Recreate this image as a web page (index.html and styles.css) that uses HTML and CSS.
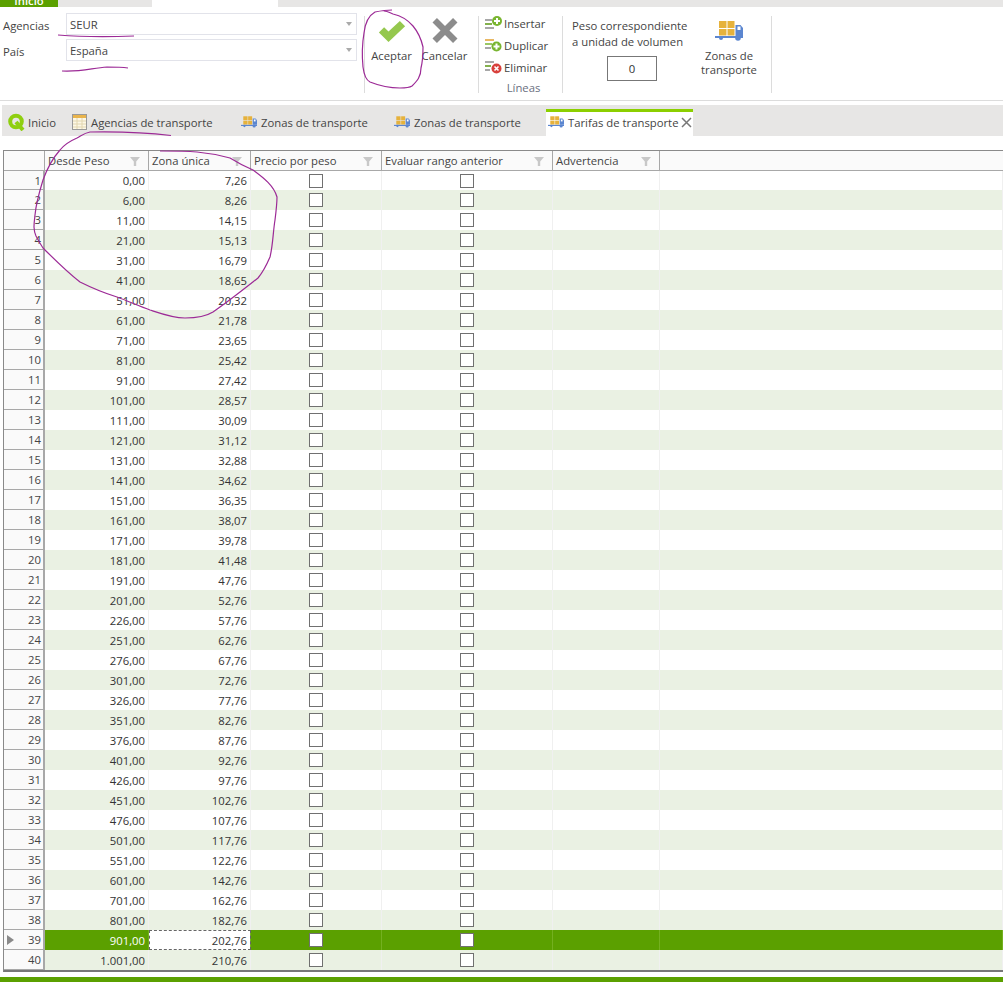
FILE: index.html

```html
<!DOCTYPE html>
<html lang="en">
<head>
    <meta charset="UTF-8">
    <title>Tarifas de transporte</title>
    <link rel="stylesheet" href="styles.css">
</head>
<body>
<svg class="defs" width="0" height="0">
    <symbol id="truck" viewBox="0 0 28 20">
        <rect x="4" y="0" width="7.500" height="7" fill="#e6b23c"/>
        <rect x="12.500" y="0" width="7" height="7" fill="#e6b23c"/>
        <rect x="4" y="8" width="7.500" height="6.500" fill="#e6b23c"/>
        <rect x="12.500" y="8" width="7" height="6.500" fill="#e6b23c"/>
        <path d="M20.500 4h5l2.500 3v8h-7.500z" fill="#5b86d0"/>
        <rect x="22.500" y="5.500" width="3" height="3.500" fill="#fff"/>
        <rect x="0" y="15" width="28" height="2" fill="#5b86d0"/>
        <circle cx="6" cy="17" r="2" fill="#5b86d0"/>
        <circle cx="23" cy="17" r="2.800" fill="#5b86d0"/>
    </symbol>
</svg>

<div class="topstrip">
    <div class="filetab">Inicio</div>
    <div class="hometab"></div>
</div>

<div class="ribbon">
    <div class="filters">
        <div class="field"><label>Agencias</label><div class="combo">SEUR<i class="arrow"></i></div></div>
        <div class="field"><label>País</label><div class="combo">España<i class="arrow"></i></div></div>
    </div>
    <div class="group actions">
        <div class="bigbtn accept">
            <svg width="28" height="23" viewBox="0 0 32 26"><path d="M1 14l6-6 5 5L25 1l6 6-19 18z" fill="#95c84e"/></svg>
            <span>Aceptar</span>
        </div>
        <div class="bigbtn cancel">
            <svg width="26" height="25" viewBox="0 0 28 28"><path d="M5 0l9 9 9-9 5 5-9 9 9 9-5 5-9-9-9 9-5-5 9-9-9-9z" fill="#8c8c8c"/></svg>
            <span>Cancelar</span>
        </div>
    </div>
    <div class="group lines">
        <div class="linebtn">
            <svg width="17" height="14" viewBox="0 0 17 14">
                <path d="M0 4h7M0 8h7M0 12h9" stroke="#8a8a8a" stroke-width="1.500"/>
                <path d="M0 8h7" stroke="#79b530" stroke-width="1.500"/>
                <circle cx="12" cy="5" r="5" fill="#79b530"/>
                <path d="M12 2v6M9 5h6" stroke="#fff" stroke-width="2"/>
            </svg>
            Insertar
        </div>
        <div class="linebtn">
            <svg width="17" height="14" viewBox="0 0 17 14">
                <path d="M0 2h9" stroke="#e0a030" stroke-width="1.500"/>
                <path d="M0 6h7" stroke="#79b530" stroke-width="1.500"/>
                <path d="M0 10h6" stroke="#8a8a8a" stroke-width="1.500"/>
                <circle cx="11.500" cy="8.500" r="5" fill="#79b530"/>
                <path d="M11.500 5.500v6M8.500 8.500h6" stroke="#fff" stroke-width="2"/>
            </svg>
            Duplicar
        </div>
        <div class="linebtn">
            <svg width="17" height="14" viewBox="0 0 17 14">
                <path d="M0 2h9M0 6h6M0 10h5" stroke="#8a8a8a" stroke-width="1.500"/>
                <path d="M0 6h6" stroke="#79b530" stroke-width="1.500"/>
                <circle cx="11.500" cy="8.500" r="5" fill="#d8403c"/>
                <path d="M9.500 6.500l4 4M13.500 6.500l-4 4" stroke="#fff" stroke-width="1.600"/>
            </svg>
            Eliminar
        </div>
        <div class="grouplabel">Líneas</div>
    </div>
    <div class="group weight">
        <div class="weightlabel">Peso correspondiente<br>a unidad de volumen</div>
        <div class="weightbox">0</div>
    </div>
    <div class="group zones">
        <svg width="28" height="20"><use href="#truck"/></svg>
        <span>Zonas de<br>transporte</span>
    </div>
</div>

<div class="tabstrip">
    <div class="tab tab-home">
        <svg width="17" height="18" viewBox="0 0 17 18"><circle cx="8" cy="8.500" r="5.800" fill="none" stroke="#8fcf10" stroke-width="4"/><path d="M8 9l7 8" stroke="#8fcf10" stroke-width="4"/></svg>
        Inicio
    </div>
    <div class="tab tab-agencies">
        <svg width="15" height="16" viewBox="0 0 15 16">
            <rect x="0.500" y="0.500" width="14" height="15" fill="#fdf8e6" stroke="#9a9a9a"/>
            <rect x="1" y="1" width="13" height="3" fill="#e9b44c"/>
            <path d="M1 7h13M1 10h13M1 13h13M5 4v11M10 4v11" stroke="#e2d6b0"/>
        </svg>
        Agencias de transporte
    </div>
    <div class="tab tab-zones1"><svg width="16" height="12"><use href="#truck"/></svg>Zonas de transporte</div>
    <div class="tab tab-zones2"><svg width="16" height="12"><use href="#truck"/></svg>Zonas de transporte</div>
    <div class="tab tab-active">
        <svg width="16" height="12"><use href="#truck"/></svg>Tarifas de transporte
        <svg class="tabclose" width="11" height="11" viewBox="0 0 11 11"><path d="M1 1l9 9M10 1l-9 9" stroke="#777" stroke-width="1.500"/></svg>
    </div>
</div>

<table class="grid">
    <colgroup>
        <col class="c-head"><col class="c-from"><col class="c-zone"><col class="c-price"><col class="c-eval"><col class="c-warn"><col>
    </colgroup>
    <thead>
        <tr>
            <th></th>
            <th>Desde Peso<i class="filter"></i></th>
            <th>Zona única<i class="filter"></i></th>
            <th>Precio por peso<i class="filter"></i></th>
            <th>Evaluar rango anterior<i class="filter"></i></th>
            <th>Advertencia<i class="filter"></i></th>
            <th class="filler"></th>
        </tr>
    </thead>
    <tbody>
        <tr><th>1</th><td>0,00</td><td>7,26</td><td><i class="cb"></i></td><td><i class="cb"></i></td><td></td><td></td></tr>
        <tr><th>2</th><td>6,00</td><td>8,26</td><td><i class="cb"></i></td><td><i class="cb"></i></td><td></td><td></td></tr>
        <tr><th>3</th><td>11,00</td><td>14,15</td><td><i class="cb"></i></td><td><i class="cb"></i></td><td></td><td></td></tr>
        <tr><th>4</th><td>21,00</td><td>15,13</td><td><i class="cb"></i></td><td><i class="cb"></i></td><td></td><td></td></tr>
        <tr><th>5</th><td>31,00</td><td>16,79</td><td><i class="cb"></i></td><td><i class="cb"></i></td><td></td><td></td></tr>
        <tr><th>6</th><td>41,00</td><td>18,65</td><td><i class="cb"></i></td><td><i class="cb"></i></td><td></td><td></td></tr>
        <tr><th>7</th><td>51,00</td><td>20,32</td><td><i class="cb"></i></td><td><i class="cb"></i></td><td></td><td></td></tr>
        <tr><th>8</th><td>61,00</td><td>21,78</td><td><i class="cb"></i></td><td><i class="cb"></i></td><td></td><td></td></tr>
        <tr><th>9</th><td>71,00</td><td>23,65</td><td><i class="cb"></i></td><td><i class="cb"></i></td><td></td><td></td></tr>
        <tr><th>10</th><td>81,00</td><td>25,42</td><td><i class="cb"></i></td><td><i class="cb"></i></td><td></td><td></td></tr>
        <tr><th>11</th><td>91,00</td><td>27,42</td><td><i class="cb"></i></td><td><i class="cb"></i></td><td></td><td></td></tr>
        <tr><th>12</th><td>101,00</td><td>28,57</td><td><i class="cb"></i></td><td><i class="cb"></i></td><td></td><td></td></tr>
        <tr><th>13</th><td>111,00</td><td>30,09</td><td><i class="cb"></i></td><td><i class="cb"></i></td><td></td><td></td></tr>
        <tr><th>14</th><td>121,00</td><td>31,12</td><td><i class="cb"></i></td><td><i class="cb"></i></td><td></td><td></td></tr>
        <tr><th>15</th><td>131,00</td><td>32,88</td><td><i class="cb"></i></td><td><i class="cb"></i></td><td></td><td></td></tr>
        <tr><th>16</th><td>141,00</td><td>34,62</td><td><i class="cb"></i></td><td><i class="cb"></i></td><td></td><td></td></tr>
        <tr><th>17</th><td>151,00</td><td>36,35</td><td><i class="cb"></i></td><td><i class="cb"></i></td><td></td><td></td></tr>
        <tr><th>18</th><td>161,00</td><td>38,07</td><td><i class="cb"></i></td><td><i class="cb"></i></td><td></td><td></td></tr>
        <tr><th>19</th><td>171,00</td><td>39,78</td><td><i class="cb"></i></td><td><i class="cb"></i></td><td></td><td></td></tr>
        <tr><th>20</th><td>181,00</td><td>41,48</td><td><i class="cb"></i></td><td><i class="cb"></i></td><td></td><td></td></tr>
        <tr><th>21</th><td>191,00</td><td>47,76</td><td><i class="cb"></i></td><td><i class="cb"></i></td><td></td><td></td></tr>
        <tr><th>22</th><td>201,00</td><td>52,76</td><td><i class="cb"></i></td><td><i class="cb"></i></td><td></td><td></td></tr>
        <tr><th>23</th><td>226,00</td><td>57,76</td><td><i class="cb"></i></td><td><i class="cb"></i></td><td></td><td></td></tr>
        <tr><th>24</th><td>251,00</td><td>62,76</td><td><i class="cb"></i></td><td><i class="cb"></i></td><td></td><td></td></tr>
        <tr><th>25</th><td>276,00</td><td>67,76</td><td><i class="cb"></i></td><td><i class="cb"></i></td><td></td><td></td></tr>
        <tr><th>26</th><td>301,00</td><td>72,76</td><td><i class="cb"></i></td><td><i class="cb"></i></td><td></td><td></td></tr>
        <tr><th>27</th><td>326,00</td><td>77,76</td><td><i class="cb"></i></td><td><i class="cb"></i></td><td></td><td></td></tr>
        <tr><th>28</th><td>351,00</td><td>82,76</td><td><i class="cb"></i></td><td><i class="cb"></i></td><td></td><td></td></tr>
        <tr><th>29</th><td>376,00</td><td>87,76</td><td><i class="cb"></i></td><td><i class="cb"></i></td><td></td><td></td></tr>
        <tr><th>30</th><td>401,00</td><td>92,76</td><td><i class="cb"></i></td><td><i class="cb"></i></td><td></td><td></td></tr>
        <tr><th>31</th><td>426,00</td><td>97,76</td><td><i class="cb"></i></td><td><i class="cb"></i></td><td></td><td></td></tr>
        <tr><th>32</th><td>451,00</td><td>102,76</td><td><i class="cb"></i></td><td><i class="cb"></i></td><td></td><td></td></tr>
        <tr><th>33</th><td>476,00</td><td>107,76</td><td><i class="cb"></i></td><td><i class="cb"></i></td><td></td><td></td></tr>
        <tr><th>34</th><td>501,00</td><td>117,76</td><td><i class="cb"></i></td><td><i class="cb"></i></td><td></td><td></td></tr>
        <tr><th>35</th><td>551,00</td><td>122,76</td><td><i class="cb"></i></td><td><i class="cb"></i></td><td></td><td></td></tr>
        <tr><th>36</th><td>601,00</td><td>142,76</td><td><i class="cb"></i></td><td><i class="cb"></i></td><td></td><td></td></tr>
        <tr><th>37</th><td>701,00</td><td>162,76</td><td><i class="cb"></i></td><td><i class="cb"></i></td><td></td><td></td></tr>
        <tr><th>38</th><td>801,00</td><td>182,76</td><td><i class="cb"></i></td><td><i class="cb"></i></td><td></td><td></td></tr>
        <tr class="selected"><th><i class="pointer"></i>39</th><td>901,00</td><td class="current">202,76</td><td><i class="cb"></i></td><td><i class="cb"></i></td><td></td><td></td></tr>
        <tr><th>40</th><td>1.001,00</td><td>210,76</td><td><i class="cb"></i></td><td><i class="cb"></i></td><td></td><td></td></tr>
    </tbody>
</table>

<div class="statusbar"></div>

<svg class="ink" width="1003" height="982" viewBox="0 0 1003 982">
    <path d="M58 35c25 2 50 2 76 1"/>
    <path d="M62 71c20 1 30-3 45-4 8 0 14 0 21 1"/>
    <path d="M392 10c-6 0-12 1-17 2-7 4-10 12-11 21-2 12-2 24-1 34 1 8 3 13 7 15 10 4 20 6 30 6 5 0 9 0 12-2 5-5 9-9 9-18 2-8 2-14 2-21-2-9-5-15-10-21-6-7-11-10-20-12-3-1-5-3-9-3"/>
    <path d="M171 135.500c-25-3-55-4-81-3.500-6 1-9 4-13 6-7 3-13 7-17 12-8 9-13 19-17 30-4 13-7 24-8 35-1 9-2 14 1 21 3 6 5 9 7 12 12 12 24 24 37 34 12 6 24 11 37 15 11 4 22 9 33 13 12 4 23 8 35 8 10 0 20-1 28-6 16-11 31-23 45-34 5-6 9-14 12-21 3-12 3-25 5-37 1-8 2-16 2-23-3-11-13-19-24-27-7-3-15-7-23-12-11-3-22-5-33-6-12-1-25-1-37-1"/>
</svg>
</body>
</html>
```

FILE: styles.css

```css
* {
    box-sizing: border-box;
}
body {
    margin: 0;
    background: white;
    color: #444;
    font-family: "Open Sans", "Liberation Sans", sans-serif;
    font-size: 11.3px;
    overflow: hidden;
}
.defs {
    display: block;
    height: 0;
}
.topstrip {
    display: flex;
    height: 7px;
    background-color: #e7e6e5;
}
.filetab {
    width: 58px;
    background-color: #5ba000;
    color: white;
    font-weight: 600;
    line-height: 1px;
    text-align: center;
    overflow: hidden;
}
.hometab {
    width: 126px;
    margin-left: 94px;
    background-color: white;
}
.ribbon {
    display: flex;
    height: 94px;
    padding-top: 6px;
    border-bottom: 1px solid #dcdcdc;
}
.filters {
    width: 364px;
    padding-left: 3px;
}
.field {
    display: flex;
    align-items: center;
    height: 22px;
    margin-bottom: 4px;
}
.field label {
    width: 63px;
    padding-top: 2px;
}
.combo {
    position: relative;
    width: 291px;
    height: 22px;
    padding-left: 3px;
    line-height: 21px;
    border: 1px solid #e2e3ea;
}
.arrow {
    position: absolute;
    right: 4px;
    top: 8px;
    border-top: 4px solid #aaa;
    border-left: 3px solid transparent;
    border-right: 3px solid transparent;
}
.group {
    height: 77px;
    margin-top: 3px;
    border-left: 1px solid #dcdcdc;
}
.actions {
    display: flex;
    width: 114px;
}
.bigbtn {
    display: flex;
    flex-direction: column;
    align-items: center;
    width: 53px;
    flex-shrink: 0;
}
.accept svg {
    margin-top: 4px;
}
.cancel svg {
    margin-top: 2px;
}
.bigbtn span {
    margin-top: 5px;
}
.lines {
    width: 84px;
    padding-left: 6px;
}
.linebtn {
    display: flex;
    align-items: center;
    gap: 2px;
    height: 22px;
    margin-top: -4px;
    margin-bottom: 4px;
}
.grouplabel {
    margin-top: -2px;
    text-align: center;
    color: #6a6f80;
}
.weight {
    width: 133px;
    padding: 2px 0 0 9px;
    line-height: 16px;
}
.weightbox {
    width: 50px;
    height: 25px;
    margin: 6px 0 0 35px;
    border: 1px solid #777;
    line-height: 23px;
    text-align: center;
    color: #333;
}
.zones {
    display: flex;
    flex-direction: column;
    align-items: center;
    width: 77px;
    border-right: 1px solid #dcdcdc;
    border-left: 0;
    padding: 5px 8px 0 0;
    line-height: 14px;
    text-align: center;
}
.zones svg {
    margin-bottom: 8px;
}
.tabstrip {
    display: flex;
    height: 31px;
    margin: 4px 0 14px 2px;
    background-color: #e7e6e5;
}
.tab {
    display: flex;
    align-items: center;
    gap: 4px;
    margin-top: 4px;
    padding-bottom: 4px;
    border-top: 3px solid transparent;
    white-space: nowrap;
}
.tab-home {
    margin-left: 6px;
    width: 64px;
    gap: 3px;
}
.tab-agencies {
    width: 169px;
}
.tab-zones1 {
    width: 153px;
}
.tab-zones2 {
    width: 152px;
}
.tab-active {
    width: 147px;
    padding-left: 2px;
    background-color: white;
    border-top-color: #8ccf00;
}
.tabclose {
    margin-left: -1px;
}
.grid {
    width: 1000px;
    margin-left: 3px;
    border-collapse: separate;
    border-spacing: 0;
    table-layout: fixed;
    border-top: 1px solid #8a8a8a;
    border-left: 1px solid #8a8a8a;
    border-bottom: 2px solid #777;
}
.c-head { width: 41px; }
.c-from { width: 104px; }
.c-zone { width: 102px; }
.c-price { width: 131px; }
.c-eval { width: 171px; }
.c-warn { width: 107px; }
.grid thead th {
    position: relative;
    height: 20px;
    padding: 0 0 0 3px;
    background-color: #fafafa;
    border-right: 1px solid #a8a8a8;
    border-bottom: 1px solid #a8a8a8;
    font-weight: normal;
    text-align: left;
}
.grid thead .filler {
    border-right: 0;
}
.filter {
    position: absolute;
    right: 8px;
    top: 6px;
    width: 10px;
    height: 9px;
    background-color: #c8c8c8;
    clip-path: polygon(0 0, 100% 0, 62% 50%, 62% 100%, 38% 100%, 38% 50%);
}
.grid tbody th {
    position: relative;
    height: 20px;
    padding: 0 2px 0 0;
    background-color: #fafafa;
    border-right: 2px solid #a8a8a8;
    border-bottom: 1px solid #a8a8a8;
    font-weight: normal;
    text-align: right;
}
.grid td {
    height: 20px;
    padding: 0 3px 0 0;
    border-right: 1px solid #f0f0f0;
    text-align: right;
    color: #333;
}
.grid tbody tr:first-child th,
.grid tbody tr:first-child td {
    height: 19px;
}
.grid td:nth-child(4),
.grid td:nth-child(5) {
    padding: 0;
    text-align: center;
}
.grid tbody tr:nth-child(even) td {
    background-color: #eaf1e3;
}
.cb {
    display: block;
    width: 14px;
    height: 14px;
    margin: 0 auto;
    background-color: white;
    border: 1px solid #707070;
}
.grid tbody tr.selected td {
    background-color: #5ba000;
    color: white;
    border-right-color: #74b020;
}
.grid tbody tr.selected td.current {
    background-color: white;
    color: #333;
    outline: 1px dashed #666;
    outline-offset: -1px;
}
.pointer {
    position: absolute;
    left: 3px;
    top: 5px;
    border-left: 7px solid #8a8a8a;
    border-top: 5px solid transparent;
    border-bottom: 5px solid transparent;
}
.statusbar {
    height: 5px;
    margin-top: 5px;
    background-color: #5ba000;
}
.ink {
    position: absolute;
    left: 0;
    top: 0;
    pointer-events: none;
    fill: none;
    stroke: #9c2a96;
    stroke-width: 1.200;
}
```
